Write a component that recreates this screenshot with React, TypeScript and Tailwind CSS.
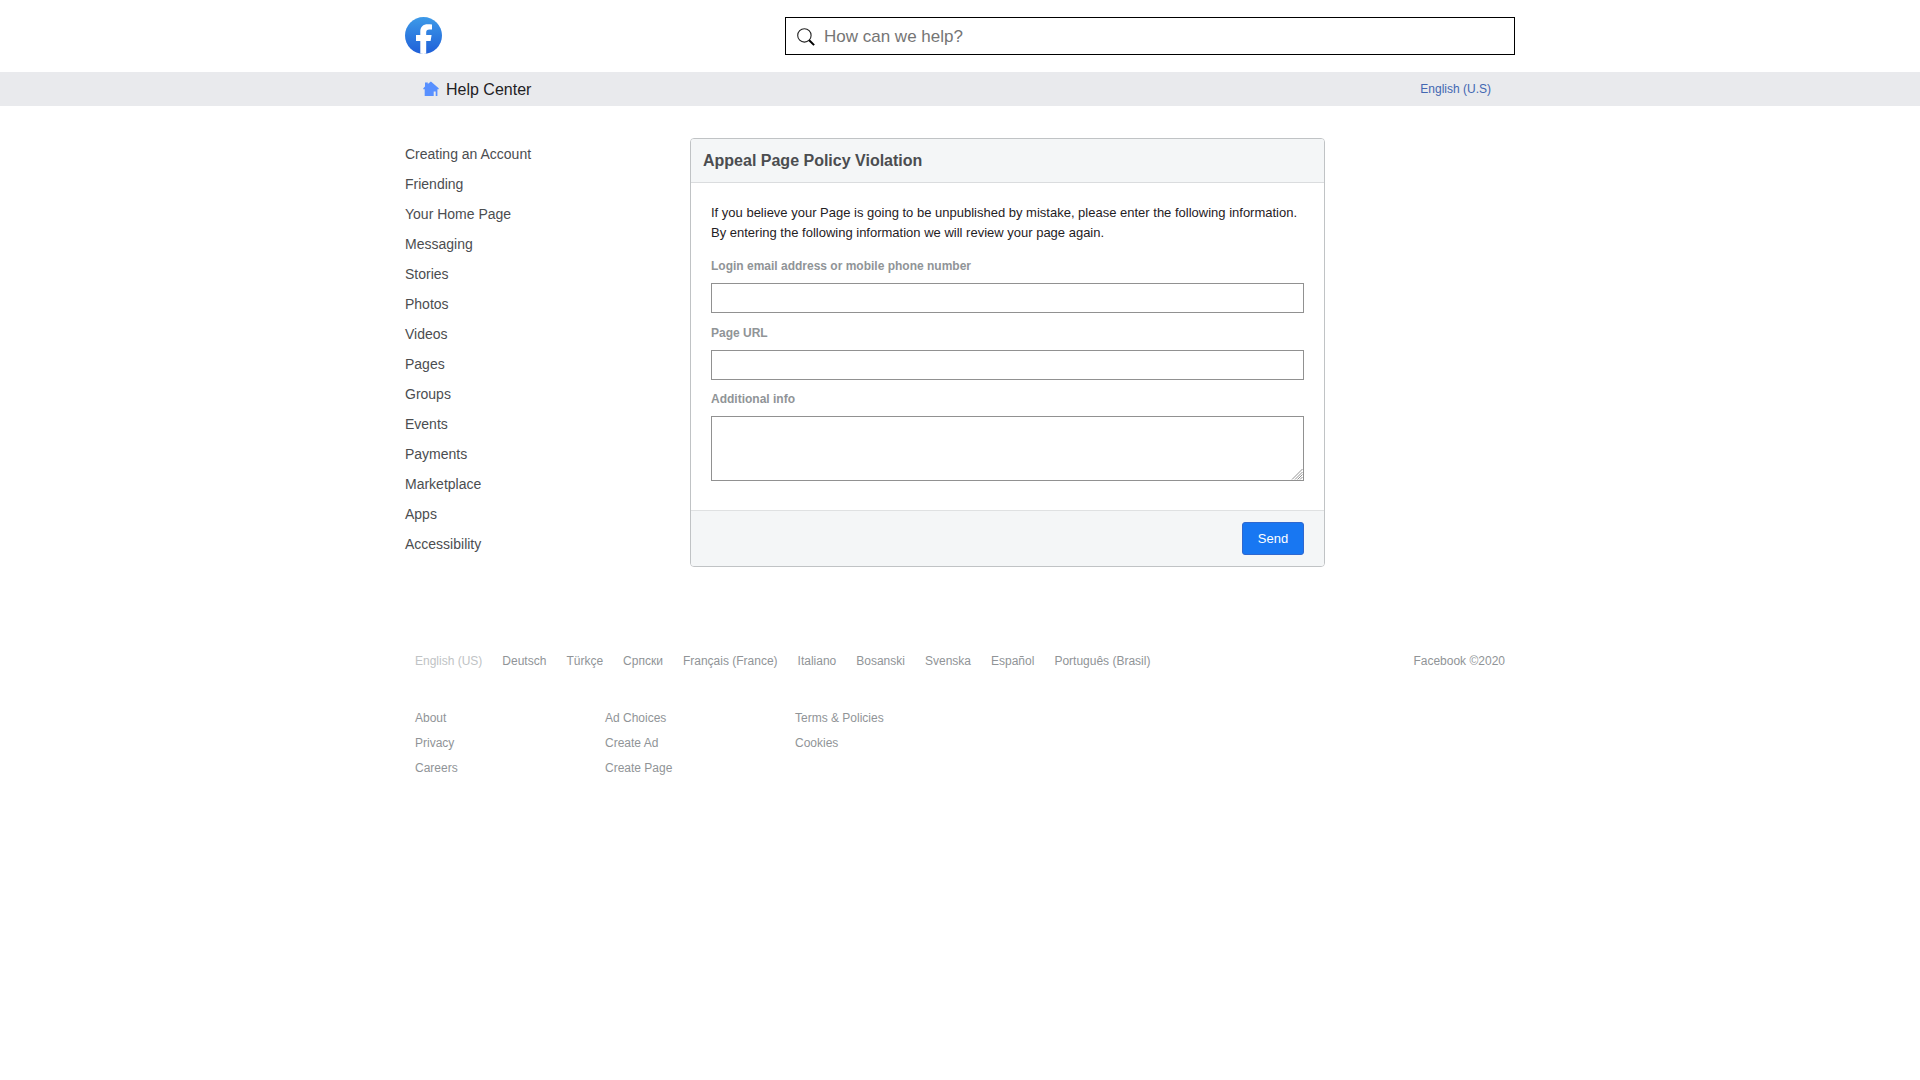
import React from 'react';

const TOPICS = [
  'Creating an Account',
  'Friending',
  'Your Home Page',
  'Messaging',
  'Stories',
  'Photos',
  'Videos',
  'Pages',
  'Groups',
  'Events',
  'Payments',
  'Marketplace',
  'Apps',
  'Accessibility',
];

const LANGUAGES = [
  'English (US)',
  'Deutsch',
  'Türkçe',
  'Српски',
  'Français (France)',
  'Italiano',
  'Bosanski',
  'Svenska',
  'Español',
  'Português (Brasil)',
];

const FOOTER_COLUMNS = [
  ['About', 'Privacy', 'Careers'],
  ['Ad Choices', 'Create Ad', 'Create Page'],
  ['Terms & Policies', 'Cookies'],
];

function FacebookLogo() {
  return (
    <svg viewBox="0 0 37 37" className="h-[37px] w-[37px]">
      <defs>
        <linearGradient id="logo-fill" x1="0" y1="0" x2="0" y2="1">
          <stop offset="0" stopColor="#3d9ae8" />
          <stop offset="1" stopColor="#1f5fd8" />
        </linearGradient>
        <clipPath id="logo-clip">
          <circle cx="18.5" cy="18.5" r="18.5" />
        </clipPath>
      </defs>
      <g clipPath="url(#logo-clip)">
        <rect width="37" height="37" fill="url(#logo-fill)" />
        <path
          d="M15.300 37V24H11v-5.900h4.300v-3.500C15.300 9.800 18 7.200 22.800 7.200c1.500 0 3 .15 4.200.4v5h-2.500c-2.500 0-3.300 1.200-3.300 2.900v2.600h5.400L25.600 24h-4.400v13z"
          fill="#fff"
        />
      </g>
    </svg>
  );
}

function SearchIcon() {
  return (
    <svg viewBox="0 0 18 18" className="h-[18px] w-[18px]" fill="none" stroke="#222">
      <circle cx="7.400" cy="7.400" r="6.700" strokeWidth="1.100" />
      <path d="M12.200 12.200L17.100 17.100" stroke="#000" strokeWidth="2" />
    </svg>
  );
}

function HouseIcon() {
  return (
    <svg viewBox="0 0 16 16" className="h-4 w-4" fill="#5890ff">
      <path d="M7.900.5L4.800 3V1.500H2v4L.3 7.300v1h1.400V15h9v-4.500h2V15H14.400V8.300h1.300v-1z" />
    </svg>
  );
}

function ResizeGrip() {
  return (
    <svg viewBox="0 0 12 12" className="absolute bottom-px right-px h-3 w-3" stroke="#777" strokeWidth="0.8">
      <path d="M1 11.500L11.500 1M4 11.500L11.500 4M6.500 11.500L11.500 6.500M9 11.500L11.500 9" />
    </svg>
  );
}

function Field({ label, children }: { label: string; children: React.ReactNode }) {
  return (
    <label className="block">
      <span className="block text-xs font-bold text-[#909497]">{label}</span>
      {children}
    </label>
  );
}

function AppealForm() {
  return (
    <form className="h-[429px] w-[635px] overflow-hidden rounded border border-[#c0c3c5] bg-white">
      <h1 className="flex h-11 items-center border-b border-[#dadcde] bg-[#f4f6f7] px-3 text-base font-bold text-[#4b4d50]">
        Appeal Page Policy Violation
      </h1>
      <div className="h-[327px] px-5 pt-5">
        <p className="text-[13px] leading-5 text-[#1f2124]">
          If you believe your Page is going to be unpublished by mistake, please enter the following information.
          <br />
          By entering the following information we will review your page again.
        </p>
        <div className="mt-[15px]">
          <Field label="Login email address or mobile phone number">
            <input className="mt-[9px] block h-[30px] w-full border border-[#919191] px-2 text-[13px] outline-none" />
          </Field>
        </div>
        <div className="mt-3">
          <Field label="Page URL">
            <input className="mt-[9px] block h-[30px] w-full border border-[#919191] px-2 text-[13px] outline-none" />
          </Field>
        </div>
        <div className="mt-[11px]">
          <Field label="Additional info">
            <div className="relative mt-[9px]">
              <textarea className="block h-[65px] w-full resize-none border border-[#919191] px-2 text-[13px] outline-none" />
              <ResizeGrip />
            </div>
          </Field>
        </div>
      </div>
      <div className="flex h-[56px] items-start justify-end border-t border-[#dfe1e2] bg-[#f4f6f7] px-5 pt-[11px]">
        <button
          type="button"
          className="h-[33px] w-[62px] rounded-[3px] border border-[#2f68cf] bg-[#1877f2] text-[13px] text-white"
        >
          Send
        </button>
      </div>
    </form>
  );
}

export default function App() {
  return (
    <div className="min-h-screen bg-white font-['Liberation_Sans',Arial,sans-serif]">
      <header className="mx-auto flex h-[72px] w-[1110px] items-start justify-between pt-[17px]">
        <FacebookLogo />
        <div className="flex h-[38px] w-[730px] items-center gap-[9px] border border-black pl-[11px] pt-0.5">
          <SearchIcon />
          <input
            placeholder="How can we help?"
            className="min-w-0 flex-1 text-[17px] outline-none placeholder:text-[#757575]"
          />
        </div>
      </header>

      <div className="h-[34px] bg-[#e9eaed]">
        <div className="mx-auto flex h-full w-[1110px] items-center justify-between pl-[18px] pr-6">
          <div className="flex items-center gap-[7px] text-base text-[#1f2124]">
            <HouseIcon />
            <span className="pt-0.5">Help Center</span>
          </div>
          <a className="text-xs text-[#4267b2]">English (U.S)</a>
        </div>
      </div>

      <main className="mx-auto flex w-[1110px] pt-8">
        <nav className="w-[285px] pt-px">
          <ul className="text-sm leading-[30px] text-[#4b4d50]">
            {TOPICS.map((topic) => (
              <li key={topic}>{topic}</li>
            ))}
          </ul>
        </nav>
        <AppealForm />
      </main>

      <footer className="mx-auto mt-[86px] w-[1110px] px-[10px] pb-10 text-xs text-[#909497]">
        <div className="flex justify-between">
          <ul className="flex gap-5">
            {LANGUAGES.map((language, i) => (
              <li key={language} className={i === 0 ? 'text-[#c0c3c5]' : ''}>
                {language}
              </li>
            ))}
          </ul>
          <span>Facebook ©2020</span>
        </div>
        <div className="mt-[37px] flex leading-[25px]">
          {FOOTER_COLUMNS.map((column) => (
            <ul key={column[0]} className="w-[190px]">
              {column.map((item) => (
                <li key={item}>{item}</li>
              ))}
            </ul>
          ))}
        </div>
      </footer>
    </div>
  );
}
